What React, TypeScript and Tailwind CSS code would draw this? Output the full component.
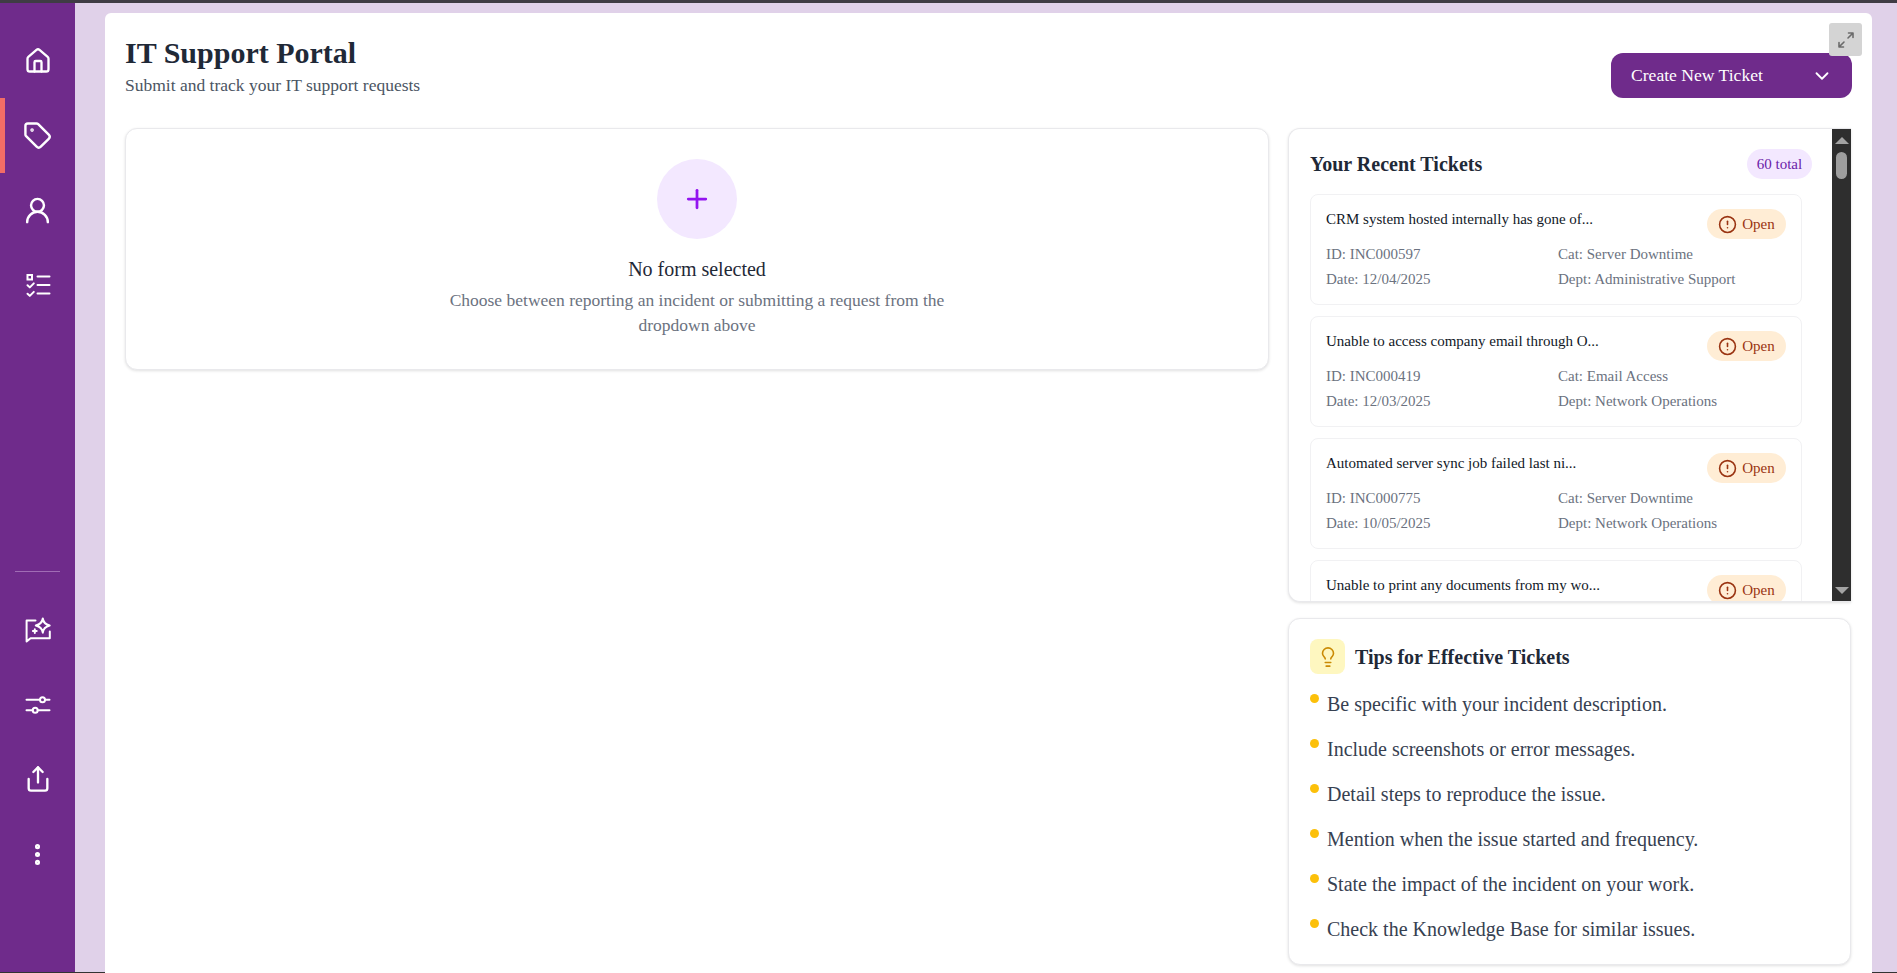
import React from "react";
import { House, Tag, UserRound, Share, EllipsisVertical, Plus, ChevronDown, Lightbulb, CircleAlert } from "lucide-react";

const ListIcon = () => (
  <svg width="26" height="26" viewBox="0 1 26 26" fill="none" stroke="currentColor" strokeWidth="2" strokeLinecap="round" strokeLinejoin="round">
    <rect x="2.5" y="3" width="4.5" height="4.5" strokeLinecap="square" strokeLinejoin="miter" />
    <path d="M12.5 4.5h12M12.5 13h12M12.5 21.5h12" />
    <path d="M2.5 13.2l2.3 2.2 4-4M2.5 21.7l2.3 2.2 4-4" />
  </svg>
);

const ChatSpark = () => (
  <svg width="28" height="28" viewBox="0 0 28 28" fill="none" stroke="currentColor" strokeWidth="2" strokeLinecap="round" strokeLinejoin="round">
    <path d="M11.5 4.6H2.6V25.4l4-3.2h19.2V15.5" />
    <path d="M18.8 2.5c.5 3.9 2.4 5.9 6.9 7-4.5 1.1-6.4 3.2-6.9 7.2-.6-4-2.5-6.1-7-7.2 4.5-1.1 6.4-3.1 7-7z" />
    <path d="M10.8 13.2v3.8M8.9 15.1h3.8" />
  </svg>
);

const Sliders = () => (
  <svg width="26" height="26" viewBox="0 0 26 26" fill="none" stroke="currentColor" strokeWidth="2" strokeLinecap="round">
    <path d="M1.5 7.8h13.5M20 7.8h4.5M1.5 18.2h6.2M12.7 18.2h11.8" />
    <circle cx="17.5" cy="7.8" r="2.5" />
    <circle cx="10.2" cy="18.2" r="2.5" />
  </svg>
);

const ExpandIcon = () => (
  <svg width="18" height="18" viewBox="0 0 18 18" fill="none" stroke="#6b6b6b" strokeWidth="1.6" strokeLinecap="round" strokeLinejoin="round">
    <path d="M11 7l5-5M11.5 2H16v4.5" />
    <path d="M7 11l-5 5M2 11.5V16h4.5" />
  </svg>
);

const Nav = ({ children, active }: { children: React.ReactNode; active?: boolean }) => (
  <div className="relative flex h-[75px] w-full items-center justify-center text-white">
    {active && <div className="absolute left-0 top-0 h-full w-[5px] bg-[#f26d66]" />}
    {children}
  </div>
);

type Ticket = { t: string; id?: string; cat?: string; date?: string; dept?: string };

const tickets: Ticket[] = [
  { t: "CRM system hosted internally has gone of...", id: "INC000597", cat: "Server Downtime", date: "12/04/2025", dept: "Administrative Support" },
  { t: "Unable to access company email through O...", id: "INC000419", cat: "Email Access", date: "12/03/2025", dept: "Network Operations" },
  { t: "Automated server sync job failed last ni...", id: "INC000775", cat: "Server Downtime", date: "10/05/2025", dept: "Network Operations" },
  { t: "Unable to print any documents from my wo..." },
];

const tips = [
  "Be specific with your incident description.",
  "Include screenshots or error messages.",
  "Detail steps to reproduce the issue.",
  "Mention when the issue started and frequency.",
  "State the impact of the incident on your work.",
  "Check the Knowledge Base for similar issues.",
];

export default function App() {
  return (
    <div className="flex h-[973px] w-[1897px] flex-col overflow-hidden bg-[#e0d1e9] font-['Liberation_Serif',serif]">
      <div className="h-[3px] shrink-0 bg-[#3f3c44]" />
      <div className="flex min-h-0 flex-1">
        <aside className="flex w-[75px] shrink-0 flex-col items-center bg-[#6f2b8b] pt-[20px] text-white">
          <Nav><House size={28} strokeWidth={2} /></Nav>
          <Nav active><Tag size={29} strokeWidth={2} /></Nav>
          <Nav><UserRound size={31} strokeWidth={1.9} /></Nav>
          <Nav><ListIcon /></Nav>
          <div className="mt-[248px] mb-[20px] h-px w-[45px] bg-[#a06cb5]" />
          <Nav><ChatSpark /></Nav>
          <Nav><Sliders /></Nav>
          <Nav><Share size={28} strokeWidth={2} className="-mt-[2px]" /></Nav>
          <Nav><EllipsisVertical size={27} strokeWidth={2.5} /></Nav>
        </aside>
        <main className="min-w-0 flex-1 pl-[30px] pr-[25px] pt-[10px]">
          <div className="relative h-[970px] rounded-t-[6px] bg-white px-[20px] pt-[25px]">
            <button className="absolute right-[10px] top-[10px] z-10 flex h-[33px] w-[33px] items-center justify-center rounded-[3px] bg-[#d4d4d4]">
              <ExpandIcon />
            </button>
            <header className="flex h-[90px] items-start justify-between">
              <div>
                <h1 className="text-[30px] leading-[30px] font-bold text-[#1f2937]">IT Support Portal</h1>
                <p className="mt-[5px] text-[17.5px] leading-[24px] text-[#4b5563]">Submit and track your IT support requests</p>
              </div>
              <button className="mt-[15px] flex h-[45px] w-[241px] items-center justify-between rounded-[12px] bg-[#6f2b8b] pl-[20px] pr-[19px] text-[17.6px] text-white">
                Create New Ticket
                <ChevronDown size={22} strokeWidth={2} />
              </button>
            </header>
            <div className="flex gap-[19px]">
              <section className="flex h-[242px] w-[1144px] shrink-0 flex-col items-center rounded-[12px] border border-[#e9e9ec] bg-white pt-[30px] shadow-[0_1px_3px_rgba(0,0,0,0.12)]">
                <div className="flex h-[80px] w-[80px] items-center justify-center rounded-full bg-[#f3e8ff] text-[#9314f0]">
                  <Plus size={30} strokeWidth={2.2} />
                </div>
                <h2 className="mt-[16px] text-[20px] leading-[28px] text-[#1f2937]">No form selected</h2>
                <p className="mt-[5px] w-[512px] text-center text-[17.5px] leading-[25px] text-[#6b7280]">
                  Choose between reporting an incident or submitting a request from the dropdown above
                </p>
              </section>
              <div className="flex w-[563px] flex-col gap-[16px]">
                <section className="relative flex h-[474px] overflow-hidden rounded-l-[12px] border border-[#e9e9ec] border-r-0 bg-white shadow-[0_1px_3px_rgba(0,0,0,0.12)]">
                  <div className="min-w-0 flex-1 pl-[21px] pr-[30px]">
                    <div className="flex h-[65px] items-center justify-between pt-[5px]">
                      <h3 className="text-[20px] font-bold text-[#1f2937]">Your Recent Tickets</h3>
                      <span className="mr-[-10px] flex h-[30px] w-[65px] items-center justify-center rounded-full bg-[#f3e8ff] text-[15px] text-[#6b21a8]">60 total</span>
                    </div>
                    <div className="flex flex-col gap-[11px]">
                      {tickets.map((k) => (
                        <article key={k.t} className="h-[111px] shrink-0 rounded-[8px] border border-[#f1f1f3] bg-white px-[15px] pt-[14px]">
                          <div className="flex items-start justify-between">
                            <p className="mt-[3px] text-[15px] leading-[15px] text-[#111827]">{k.t}</p>
                            <span className="flex h-[30px] w-[79px] shrink-0 items-center justify-center gap-[5px] rounded-full bg-[#ffedd5] text-[15px] text-[#9a3412]">
                              <CircleAlert size={19} strokeWidth={2} />
                              Open
                            </span>
                          </div>
                          {k.id && (
                            <div className="mt-[5px] grid grid-cols-2 gap-x-[4px] gap-y-[5px] text-[15px] leading-[20px] text-[#6b7280]">
                              <span>ID: {k.id}</span>
                              <span>Cat: {k.cat}</span>
                              <span>Date: {k.date}</span>
                              <span>Dept: {k.dept}</span>
                            </div>
                          )}
                        </article>
                      ))}
                    </div>
                  </div>
                  <div className="flex w-[19px] shrink-0 flex-col items-center bg-[#2e2e2e] pt-[8px]">
                    <div className="h-0 w-0 border-x-[7px] border-b-[7px] border-x-transparent border-b-[#a3a3a3]" />
                    <div className="mt-[8px] h-[27px] w-[11px] rounded-full bg-[#9e9e9e]" />
                    <div className="mt-auto mb-[7px] h-0 w-0 border-x-[7px] border-t-[7px] border-x-transparent border-t-[#a3a3a3]" />
                  </div>
                </section>
                <section className="h-[347px] rounded-[12px] border border-[#e9e9ec] bg-white px-[21px] pt-[20px] shadow-[0_1px_3px_rgba(0,0,0,0.12)]">
                  <div className="flex items-center gap-[10px]">
                    <div className="flex h-[35px] w-[35px] items-center justify-center rounded-[8px] bg-[#fef7c0] text-[#ca8a04]">
                      <Lightbulb size={22} strokeWidth={1.75} />
                    </div>
                    <h3 className="text-[20px] font-bold text-[#1f2937]">Tips for Effective Tickets</h3>
                  </div>
                  <ul className="mt-[16px] flex flex-col gap-[17px]">
                    {tips.map((t) => (
                      <li key={t} className="flex items-start gap-[8px]">
                        <span className="mt-[4px] h-[9px] w-[9px] shrink-0 rounded-full bg-[#fcc00a]" />
                        <span className="text-[20px] leading-[28px] text-[#374151]">{t}</span>
                      </li>
                    ))}
                  </ul>
                </section>
              </div>
            </div>
          </div>
        </main>
      </div>
      <div className="h-px shrink-0 bg-[#333333]" />
    </div>
  );
}
